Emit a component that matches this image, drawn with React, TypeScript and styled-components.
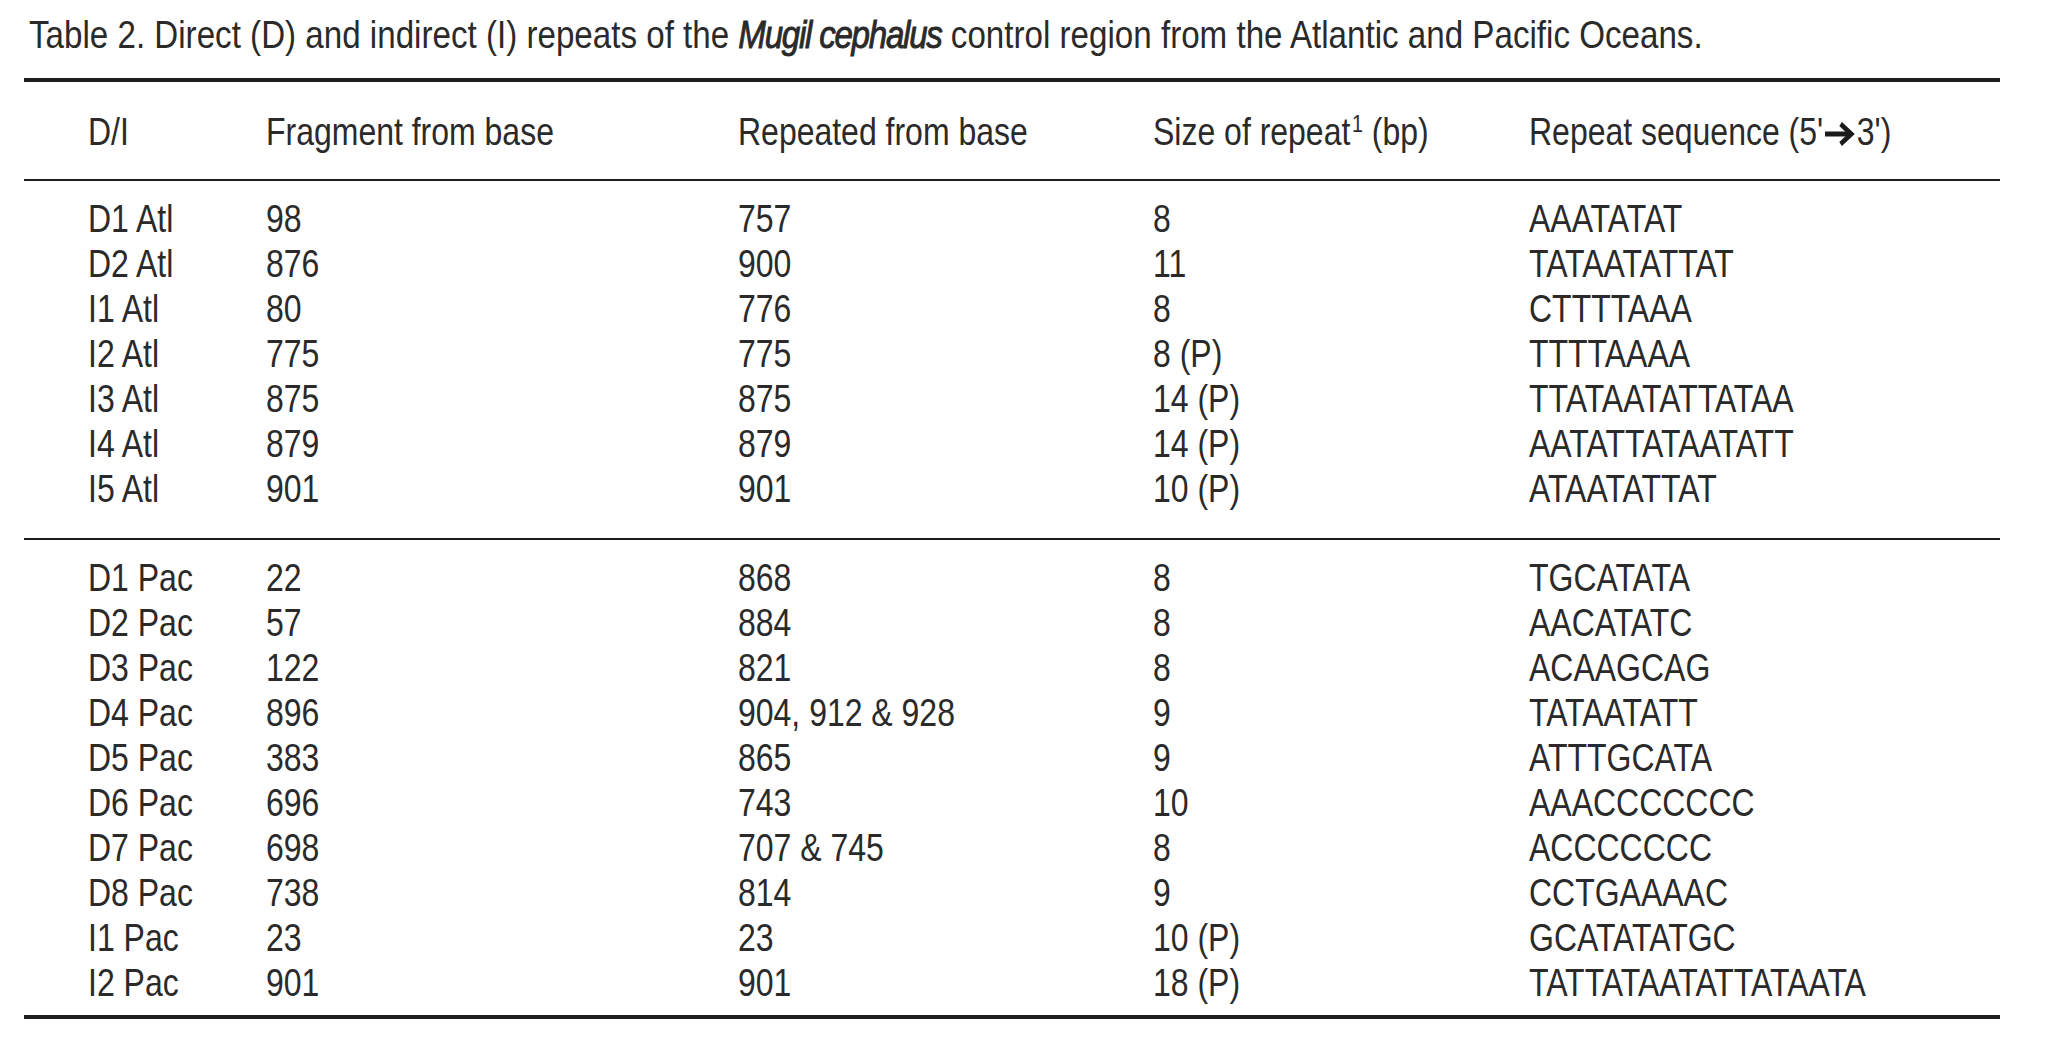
import React from 'react'
import styled, { createGlobalStyle } from 'styled-components'

type RowType = {
  id: string
  fragment: string
  repeated: string
  size: string
  sequence: string
}

const atlanticRows: RowType[] = [
  { id: 'D1 Atl', fragment: '98', repeated: '757', size: '8', sequence: 'AAATATAT' },
  { id: 'D2 Atl', fragment: '876', repeated: '900', size: '11', sequence: 'TATAATATTAT' },
  { id: 'I1 Atl', fragment: '80', repeated: '776', size: '8', sequence: 'CTTTTAAA' },
  { id: 'I2 Atl', fragment: '775', repeated: '775', size: '8 (P)', sequence: 'TTTTAAAA' },
  { id: 'I3 Atl', fragment: '875', repeated: '875', size: '14 (P)', sequence: 'TTATAATATTATAA' },
  { id: 'I4 Atl', fragment: '879', repeated: '879', size: '14 (P)', sequence: 'AATATTATAATATT' },
  { id: 'I5 Atl', fragment: '901', repeated: '901', size: '10 (P)', sequence: 'ATAATATTAT' },
]

const pacificRows: RowType[] = [
  { id: 'D1 Pac', fragment: '22', repeated: '868', size: '8', sequence: 'TGCATATA' },
  { id: 'D2 Pac', fragment: '57', repeated: '884', size: '8', sequence: 'AACATATC' },
  { id: 'D3 Pac', fragment: '122', repeated: '821', size: '8', sequence: 'ACAAGCAG' },
  { id: 'D4 Pac', fragment: '896', repeated: '904, 912 & 928', size: '9', sequence: 'TATAATATT' },
  { id: 'D5 Pac', fragment: '383', repeated: '865', size: '9', sequence: 'ATTTGCATA' },
  { id: 'D6 Pac', fragment: '696', repeated: '743', size: '10', sequence: 'AAACCCCCCC' },
  { id: 'D7 Pac', fragment: '698', repeated: '707 & 745', size: '8', sequence: 'ACCCCCCC' },
  { id: 'D8 Pac', fragment: '738', repeated: '814', size: '9', sequence: 'CCTGAAAAC' },
  { id: 'I1 Pac', fragment: '23', repeated: '23', size: '10 (P)', sequence: 'GCATATATGC' },
  { id: 'I2 Pac', fragment: '901', repeated: '901', size: '18 (P)', sequence: 'TATTATAATATTATAATA' },
]

const GlobalStyle = createGlobalStyle`
  html, body {
    margin: 0;
    padding: 0;
    background: #ffffff;
  }
  body {
    font-family: "Liberation Sans", Arial, sans-serif;
    color: #2a2a2a;
  }
`

const Arrow = () => (
  <ArrowIcon viewBox="0 0 38 24" aria-hidden="true">
    <path d="M1 12 H32" stroke="#1a1a1a" strokeWidth="5.2" fill="none" />
    <path d="M20 2 L33 12 L20 22" stroke="#1a1a1a" strokeWidth="5.2" fill="none" strokeLinejoin="miter" />
  </ArrowIcon>
)

const DataRow = ({ row }: { row: RowType }) => (
  <Row>
    <Cell><Narrow>{row.id}</Narrow></Cell>
    <Cell><Narrow>{row.fragment}</Narrow></Cell>
    <Cell><Narrow>{row.repeated}</Narrow></Cell>
    <Cell><Narrow>{row.size}</Narrow></Cell>
    <Cell><Narrow>{row.sequence}</Narrow></Cell>
  </Row>
)

const App = () => {
  return (
    <>
      <GlobalStyle />
      <Page>
        <Caption>
          <Narrow squeeze={0.85}>
            Table 2. Direct (D) and indirect (I) repeats of the <Species>Mugil cephalus</Species>{' '}
            control region from the Atlantic and Pacific Oceans.
          </Narrow>
        </Caption>
        <Table>
          <HeadSection>
            <Row>
              <Cell><Narrow>D/I</Narrow></Cell>
              <Cell><Narrow>Fragment from base</Narrow></Cell>
              <Cell><Narrow>Repeated from base</Narrow></Cell>
              <Cell>
                <Narrow>
                  Size of repeat<Sup>1</Sup> (bp)
                </Narrow>
              </Cell>
              <Cell>
                <Narrow>
                  Repeat sequence (5'<Arrow />3')
                </Narrow>
              </Cell>
            </Row>
          </HeadSection>
          <BodySection padTop={15} padBottom={27}>
            {atlanticRows.map((row) => (
              <DataRow key={row.id} row={row} />
            ))}
          </BodySection>
          <BodySection padTop={15} padBottom={10} last>
            {pacificRows.map((row) => (
              <DataRow key={row.id} row={row} />
            ))}
          </BodySection>
        </Table>
      </Page>
    </>
  )
}

export default App

const Page = styled.div`
  width: 2055px;
  height: 1041px;
  box-sizing: border-box;
  padding: 12px 0 0 0;
  overflow: hidden;
`

// the print face is a light condensed grotesque: squeeze Arial metrics to Arial Narrow width
const Narrow = styled.span<{ squeeze?: number }>`
  display: inline-block;
  white-space: nowrap;
  transform: scaleX(${(p) => p.squeeze ?? 0.82});
  transform-origin: 0 50%;
`

const Caption = styled.div`
  padding-left: 29px;
  font-size: 39px;
  line-height: 45px;
  white-space: nowrap;
`

const Species = styled.span`
  font-style: italic;
  letter-spacing: -1.5px;
  -webkit-text-stroke: 0.9px currentColor;
`

const Table = styled.div`
  margin: 21px 0 0 24px;
  width: 1976px;
  border-top: 4px solid #1e1e1e;
`

const HeadSection = styled.div`
  padding: 27px 0 25px;
  border-bottom: 2px solid #1e1e1e;
`

type TBody = {
  padTop: number
  padBottom: number
  last?: boolean
}

const BodySection = styled.div<TBody>`
  padding: ${(p) => p.padTop}px 0 ${(p) => p.padBottom}px;
  border-bottom: ${(p) => (p.last ? '4px' : '2px')} solid #1e1e1e;
`

const Row = styled.div`
  display: grid;
  grid-template-columns: 178px 472px 415px 376px 1fr;
  padding-left: 64px;
  font-size: 39px;
  line-height: 45px;
  height: 45px;
`

const Cell = styled.div`
  white-space: nowrap;
`

const Sup = styled.span`
  font-size: 24px;
  line-height: 0;
  position: relative;
  top: -13px;
  margin-left: 2px;
`

const ArrowIcon = styled.svg`
  display: inline-block;
  width: 38px;
  height: 24px;
  margin: 0 2px 0 1px;
  vertical-align: -1px;
`
